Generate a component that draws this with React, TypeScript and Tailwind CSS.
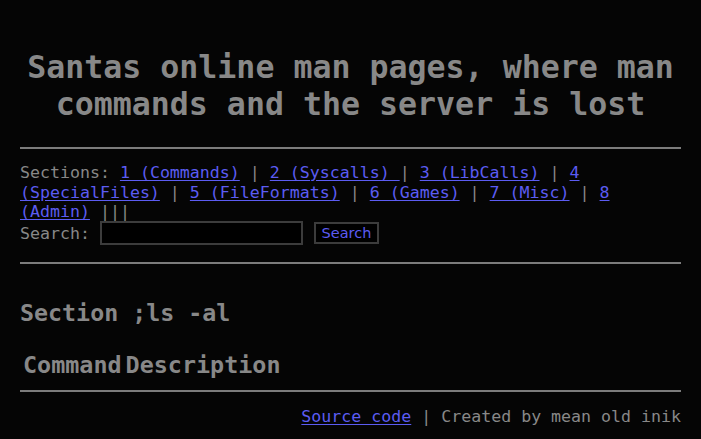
import React from "react";

const sections = [
  { label: "1 (Commands)" },
  { label: "2 (Syscalls) " },
  { label: "3 (LibCalls)" },
  { label: "4 (SpecialFiles)" },
  { label: "5 (FileFormats)" },
  { label: "6 (Games)" },
  { label: "7 (Misc)" },
  { label: "8 (Admin)" },
];

export default function App() {
  return (
    <div
      className="min-h-screen bg-[#050505] px-5 text-[16.6px] leading-[19.3px] text-[#888888]"
      style={{ fontFamily: '"DejaVu Sans Mono", monospace' }}
    >
      <h1 className="pt-[49px] text-center text-[31.6px] font-bold leading-[37.2px]">
        Santas online man pages, where man commands and the server is lost
      </h1>
      <hr className="mt-[24px] border-t-2 border-[#7c7c7c]" />

      <div className="mt-[14px]">
        Sections:{" "}
        {sections.map((s, i) => (
          <React.Fragment key={s.label}>
            <a href="#" className="text-[#5c5cf2] underline underline-offset-2">
              {s.label}
            </a>
            {i < sections.length - 1 ? " | " : " |||"}
          </React.Fragment>
        ))}
      </div>

      <form className="flex h-6 items-center" onSubmit={(e) => e.preventDefault()}>
        <span>Search:</span>
        <input
          type="text"
          className="ml-[10px] h-6 w-[203px] border-2 border-[#3c3c3c] bg-black px-1 text-[#888888] outline-none"
        />
        <button
          type="submit"
          className="ml-[11px] h-[22px] w-[65px] border-2 border-[#3c3c3c] bg-black text-[14.5px] leading-[18px] text-[#5c5cf2]"
          style={{ fontFamily: '"DejaVu Sans", sans-serif' }}
        >
          Search
        </button>
      </form>
      <hr className="mt-[17px] border-t-2 border-[#7c7c7c]" />

      <h2 className="mt-[35px] text-[23.3px] font-bold leading-[27px]">Section ;ls -al</h2>

      <table className="mt-[23px] border-separate border-spacing-[2px]">
        <thead>
          <tr>
            <th className="p-px text-left text-[23.4px] font-bold leading-[27px]">Command</th>
            <th className="p-px text-left text-[23.4px] font-bold leading-[27px]">Description</th>
          </tr>
        </thead>
      </table>
      <hr className="mt-[8px] border-t-2 border-[#7c7c7c]" />

      <div className="mt-[15px] text-right">
        <a href="#" className="text-[#5c5cf2] underline underline-offset-2">
          Source code
        </a>{" "}
        | Created by mean old inik
      </div>
    </div>
  );
}
